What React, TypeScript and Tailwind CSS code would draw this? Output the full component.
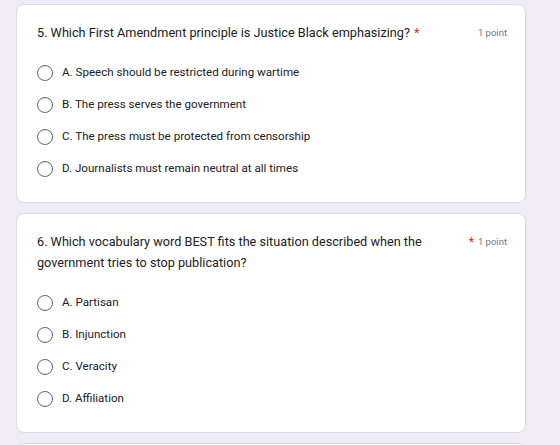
const questions = [
  {
    title: '5. Which First Amendment principle is Justice Black emphasizing?',
    inlineStar: true,
    options: [
      'A. Speech should be restricted during wartime',
      'B. The press serves the government',
      'C. The press must be protected from censorship',
      'D. Journalists must remain neutral at all times',
    ],
  },
  {
    title:
      '6. Which vocabulary word BEST fits the situation described when the government tries to stop publication?',
    inlineStar: false,
    options: ['A. Partisan', 'B. Injunction', 'C. Veracity', 'D. Affiliation'],
  },
];

function Radio() {
  return <span className="block h-4 w-4 shrink-0 rounded-full border-[1.5px] border-[#5f6368]" />;
}

function QuestionCard({ q }: { q: (typeof questions)[number] }) {
  return (
    <div className="rounded-lg border border-[#dadce0] bg-white pl-5 pr-[18px] pt-[17px] pb-[17px]">
      <div className="flex items-start">
        <p className="flex-1 pr-8 text-[12.7px] leading-[21px] text-[#202124]">
          {q.title}
          {q.inlineStar && <span className="ml-1 text-[#d93025]">*</span>}
        </p>
        <div className="flex items-center gap-1 pt-[1px] text-[9.5px] leading-[20px] text-[#70757a]">
          {!q.inlineStar && <span className="text-[12px] text-[#d93025]">*</span>}
          <span>1 point</span>
        </div>
      </div>
      <div className="mt-[14px] flex flex-col">
        {q.options.map((o) => (
          <label key={o} className="flex h-8 items-center gap-[9px]">
            <Radio />
            <span className="text-[11.6px] text-[#202124]">{o}</span>
          </label>
        ))}
      </div>
    </div>
  );
}

export default function App() {
  return (
    <div
      className="h-[445px] overflow-hidden bg-[#f0ebf8] pl-4 pr-[34px] pt-1"
      style={{ fontFamily: 'Roboto, "Liberation Sans", sans-serif' }}
    >
      <div className="flex flex-col gap-[10px]">
        {questions.map((q) => (
          <QuestionCard key={q.title} q={q} />
        ))}
        <div className="h-10 rounded-lg border border-[#dadce0] bg-white" />
      </div>
    </div>
  );
}
